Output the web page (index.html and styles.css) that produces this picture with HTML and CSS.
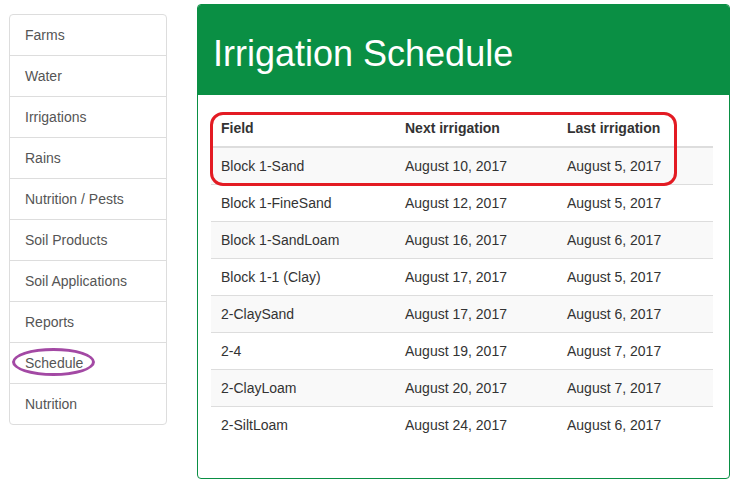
FILE: index.html
```html
<!DOCTYPE html>
<html>
<head>
<meta charset="utf-8">
<link rel="stylesheet" href="styles.css">
</head>
<body>
<div class="layout">
  <nav class="list-group">
    <a class="item">Farms</a>
    <a class="item">Water</a>
    <a class="item">Irrigations</a>
    <a class="item">Rains</a>
    <a class="item">Nutrition / Pests</a>
    <a class="item">Soil Products</a>
    <a class="item">Soil Applications</a>
    <a class="item">Reports</a>
    <a class="item"><span class="circled">Schedule<span class="ellipse"></span></span></a>
    <a class="item">Nutrition</a>
  </nav>
  <section class="panel">
    <div class="panel-heading"><h1>Irrigation Schedule</h1></div>
    <div class="panel-body">
      <div class="table-wrap">
        <span class="highlight"></span>
        <table class="table">
          <thead>
            <tr><th class="c1">Field</th><th class="c2">Next irrigation</th><th class="c3">Last irrigation</th></tr>
          </thead>
          <tbody>
            <tr><td>Block 1-Sand</td><td>August 10, 2017</td><td>August 5, 2017</td></tr>
            <tr><td>Block 1-FineSand</td><td>August 12, 2017</td><td>August 5, 2017</td></tr>
            <tr><td>Block 1-SandLoam</td><td>August 16, 2017</td><td>August 6, 2017</td></tr>
            <tr><td>Block 1-1 (Clay)</td><td>August 17, 2017</td><td>August 5, 2017</td></tr>
            <tr><td>2-ClaySand</td><td>August 17, 2017</td><td>August 6, 2017</td></tr>
            <tr><td>2-4</td><td>August 19, 2017</td><td>August 7, 2017</td></tr>
            <tr><td>2-ClayLoam</td><td>August 20, 2017</td><td>August 7, 2017</td></tr>
            <tr><td>2-SiltLoam</td><td>August 24, 2017</td><td>August 6, 2017</td></tr>
          </tbody>
        </table>
      </div>
    </div>
  </section>
</div>
</body>
</html>
```

FILE: styles.css
```css
html, body {
  margin: 0;
  padding: 0;
  background: #fff;
}
body {
  font-family: "Liberation Sans", Arial, Helvetica, sans-serif;
  font-size: 14px;
  line-height: 20px;
  color: #333;
}
.layout {
  display: flex;
  align-items: flex-start;
  padding: 4px 0 0 9px;
}
.list-group {
  width: 158px;
  margin-top: 10px;
  box-sizing: border-box;
  display: flex;
  flex-direction: column;
}
.item {
  display: block;
  padding: 10px 15px;
  border: 1px solid #ddd;
  margin-bottom: -1px;
  color: #555;
  background: #fff;
}
.item:first-child {
  border-top-left-radius: 4px;
  border-top-right-radius: 4px;
}
.item:last-child {
  margin-bottom: 0;
  border-bottom-left-radius: 4px;
  border-bottom-right-radius: 4px;
}
.circled {
  position: relative;
  display: inline-block;
}
.ellipse {
  position: absolute;
  left: -13px;
  top: -5px;
  width: 83px;
  height: 28px;
  border: 3px solid #a349a4;
  border-radius: 50%;
  box-sizing: border-box;
}
.panel {
  margin-left: 30px;
  width: 533px;
  box-sizing: border-box;
  border: 1px solid #0a8f44;
  border-radius: 4px;
  background: #fff;
}
.panel-heading {
  background: #0a8f44;
  color: #fff;
  height: 90px;
  padding: 0 15px;
  display: flex;
  align-items: center;
  border-top-left-radius: 3px;
  border-top-right-radius: 3px;
}
.panel-heading h1 {
  margin: 0;
  font-size: 36px;
  font-weight: 500;
  line-height: 40px;
  padding-top: 8px;
}
.panel-body {
  padding: 15px 15px 15px 13px;
}
.table-wrap {
  position: relative;
}
.highlight {
  position: absolute;
  left: -1px;
  top: 2px;
  width: 467px;
  height: 74px;
  border: 3px solid #e31b23;
  border-radius: 13px;
  box-sizing: border-box;
  z-index: 2;
}
.table {
  width: 502px;
  border-collapse: collapse;
  border-spacing: 0;
  margin-bottom: 20px;
}
.table th, .table td {
  padding: 8px 10px;
  text-align: left;
  line-height: 20px;
  vertical-align: top;
}
.table th {
  font-weight: bold;
  border-bottom: 2px solid #ddd;
}
.table td {
  border-top: 1px solid #ddd;
}
.table tbody tr:first-child td {
  border-top: 0;
}
.table tbody tr:nth-child(odd) {
  background: #f9f9f9;
}
.c1 { width: 164px; }
.c2 { width: 142px; }
.c3 { width: 136px; }
```
